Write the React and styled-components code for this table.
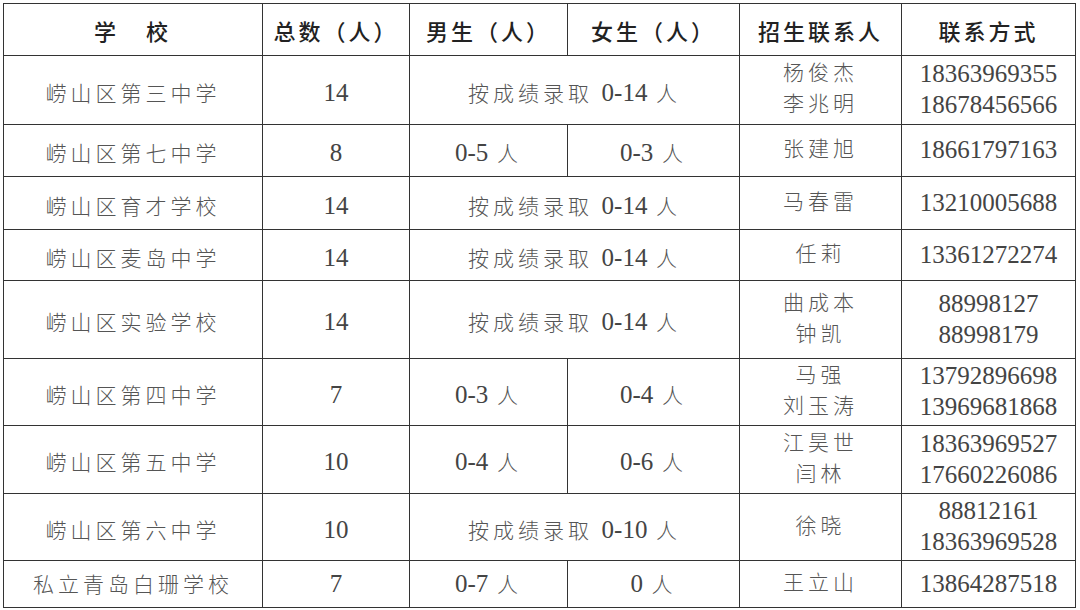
import React from 'react';
import styled, { createGlobalStyle } from 'styled-components';

const GlobalStyle = createGlobalStyle`
  html, body {
    margin: 0;
    padding: 0;
    background: #ffffff;
  }
`;

const Page = styled.div`
  width: 1080px;
  height: 610px;
  padding: 3px 0 0 3px;
  box-sizing: border-box;
  background: #fff;
  overflow: hidden;
`;

const Table = styled.table`
  border-collapse: collapse;
  table-layout: fixed;
  width: 1072px;
  font-family: "Liberation Serif", "Noto Sans CJK SC", serif;
`;

const Row = styled.tr`
  height: ${(p) => p.$h}px;
`;

const HeadCell = styled.th`
  border: 1.5px solid #333;
  padding: 0;
  text-align: center;
  vertical-align: middle;
  font-family: "Noto Sans CJK SC", sans-serif;
  font-size: 22px;
  font-weight: 500;
  letter-spacing: 3px;
  color: #222;
`;

const Cell = styled.td`
  border: 1.5px solid #333;
  padding: ${(p) => (p.$up ? '0 0 4px 0' : p.$flat ? '0' : '6px 0 0 0')};
  text-align: center;
  vertical-align: middle;
  font-size: 21px;
  font-weight: 300;
  letter-spacing: 4px;
  color: #555;
  line-height: 29px;
`;

const Num = styled.span`
  font-family: "Liberation Serif", serif;
  font-size: 25px;
  font-weight: 400;
  letter-spacing: 0;
  color: #444;
`;

const Zh = styled.span`
  font-family: "Noto Sans CJK SC", sans-serif;
`;

const Line = styled.div`
  display: block;
`;

function Mixed({ text }) {
  const parts = text.split(/([0-9\-]+)/);
  return parts.map((t, i) =>
    /^[0-9\-]+$/.test(t) ? <Num key={i}>{t}</Num> : t ? <Zh key={i}>{t}</Zh> : null
  );
}

function Lines({ items }) {
  return items.map((t, i) => (
    <Line key={i}>
      <Mixed text={t} />
    </Line>
  ));
}

const rows = [
  { h: 69, school: '崂山区第三中学', total: '14', merged: '按成绩录取 0-14 人', names: ['杨俊杰', '李兆明'], phones: ['18363969355', '18678456566'] },
  { h: 52, school: '崂山区第七中学', total: '8', boys: '0-5 人', girls: '0-3 人', names: ['张建旭'], phones: ['18661797163'] },
  { h: 53, school: '崂山区育才学校', total: '14', merged: '按成绩录取 0-14 人', names: ['马春雷'], phones: ['13210005688'] },
  { h: 51, school: '崂山区麦岛中学', total: '14', merged: '按成绩录取 0-14 人', names: ['任莉'], phones: ['13361272274'] },
  { h: 78, school: '崂山区实验学校', total: '14', merged: '按成绩录取 0-14 人', names: ['曲成本', '钟凯'], phones: ['88998127', '88998179'] },
  { h: 67, school: '崂山区第四中学', total: '7', boys: '0-3 人', girls: '0-4 人', names: ['马强', '刘玉涛'], phones: ['13792896698', '13969681868'] },
  { h: 68, school: '崂山区第五中学', total: '10', boys: '0-4 人', girls: '0-6 人', names: ['江昊世', '闫林'], phones: ['18363969527', '17660226086'] },
  { h: 67, school: '崂山区第六中学', total: '10', merged: '按成绩录取 0-10 人', names: ['徐晓'], phones: ['88812161', '18363969528'] },
  { h: 47, school: '私立青岛白珊学校', total: '7', boys: '0-7 人', girls: '0 人', names: ['王立山'], phones: ['13864287518'], last: true },
];

const widths = [259, 147, 158, 172, 162, 174];

export default function App() {
  return (
    <Page>
      <GlobalStyle />
      <Table>
        <colgroup>
          {widths.map((w, i) => (
            <col key={i} style={{ width: w }} />
          ))}
        </colgroup>
        <thead>
          <Row $h={52}>
            <HeadCell>
              <span style={{ letterSpacing: 4 }}>学　校</span>
            </HeadCell>
            <HeadCell>总数（人）</HeadCell>
            <HeadCell>男生（人）</HeadCell>
            <HeadCell>女生（人）</HeadCell>
            <HeadCell>招生联系人</HeadCell>
            <HeadCell>联系方式</HeadCell>
          </Row>
        </thead>
        <tbody>
          {rows.map((r, i) => (
            <Row key={i} $h={r.h}>
              <Cell $flat={r.last}>
                <Mixed text={r.school} />
              </Cell>
              <Cell $flat={r.last}>
                <Mixed text={r.total} />
              </Cell>
              {r.merged ? (
                <Cell colSpan={2} $flat={r.last}>
                  <Mixed text={r.merged} />
                </Cell>
              ) : (
                <>
                  <Cell $flat={r.last}>
                    <Mixed text={r.boys} />
                  </Cell>
                  <Cell $flat={r.last}>
                    <Mixed text={r.girls} />
                  </Cell>
                </>
              )}
              <Cell $up>
                <Lines items={r.names} />
              </Cell>
              <Cell $flat>
                <Lines items={r.phones} />
              </Cell>
            </Row>
          ))}
        </tbody>
      </Table>
    </Page>
  );
}
